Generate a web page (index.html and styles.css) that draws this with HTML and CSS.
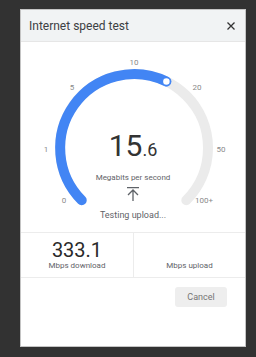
FILE: index.html
```html
<!DOCTYPE html>
<html lang="en">
<head>
  <meta charset="UTF-8">
  <meta name="viewport" content="width=device-width, initial-scale=1.0">
  <title>Internet speed test</title>
  <link rel="stylesheet" href="styles.css">
</head>
<body>
  <div class="dialog">
    <div class="dialog-header">
      <span class="dialog-title">Internet speed test</span>
      <svg class="close-icon" width="8" height="8" viewBox="0 0 8 8">
        <path d="M0.5 0.5 L7.5 7.5 M7.5 0.5 L0.5 7.5" stroke="#333" stroke-width="1.3" fill="none"/>
      </svg>
    </div>

    <div class="gauge">
      <svg class="gauge-dial" width="223" height="190" viewBox="0 0 223 190">
        <path d="M60.7 158.3 A74 74 0 1 1 165.3 158.3" stroke="#ebebeb" stroke-width="10" fill="none" stroke-linecap="round"/>
        <path d="M60.7 158.3 A74 74 0 0 1 145.4 39.5" stroke="#4285f4" stroke-width="10" fill="none" stroke-linecap="round"/>
        <circle cx="145.4" cy="39.5" r="4" fill="#fff" stroke="#4285f4" stroke-width="1.5"/>
        <g class="tick-labels">
          <text x="43" y="158">0</text>
          <text x="25" y="107">1</text>
          <text x="51" y="45">5</text>
          <text x="113" y="20">10</text>
          <text x="176" y="45">20</text>
          <text x="200" y="107">50</text>
          <text x="183" y="158">100+</text>
        </g>
      </svg>
      <div class="readout">
        <div class="speed">15<span class="speed-decimal">.6</span></div>
        <div class="speed-unit">Megabits per second</div>
        <svg class="upload-icon" width="14" height="14" viewBox="0 0 14 14">
          <path d="M1 0.7 H13 M7 3 V14 M2 8 L7 3 L12 8" stroke="#5f6368" stroke-width="1.3" fill="none"/>
        </svg>
        <div class="status">Testing upload...</div>
      </div>
    </div>

    <div class="stats">
      <div class="stat">
        <div class="stat-value">333.1</div>
        <div class="stat-label">Mbps download</div>
      </div>
      <div class="stat">
        <div class="stat-value">&nbsp;</div>
        <div class="stat-label">Mbps upload</div>
      </div>
    </div>

    <div class="dialog-footer">
      <button class="cancel-button">Cancel</button>
    </div>
  </div>
</body>
</html>
```

FILE: styles.css
```css
body {
  background-color: #323232;
  font-family: Roboto, 'Liberation Sans', sans-serif;
  margin: 0;
  height: 357px;
  overflow: hidden;
}

.dialog {
  box-sizing: border-box;
  width: 226px;
  height: 338px;
  margin: 9px 0 0 20px;
  background: #fff;
  border: 1px solid #c4c4c4;
  display: flex;
  flex-direction: column;
}

.dialog-header {
  height: 31px;
  background: #f1f3f4;
  border-bottom: 1px solid #e6e6e6;
  display: flex;
  align-items: center;
  justify-content: space-between;
  padding: 0 10px 0 8px;
}

.dialog-title {
  font-size: 12px;
  color: #3c4043;
}

.close-icon {
  display: block;
}

.gauge {
  display: grid;
  height: 190px;
}

.gauge-dial,
.readout {
  grid-area: 1 / 1;
}

.tick-labels text {
  font-family: Roboto, 'Liberation Sans', sans-serif;
  font-size: 8px;
  fill: #8a8a8a;
  text-anchor: middle;
  dominant-baseline: central;
}

.readout {
  display: flex;
  flex-direction: column;
  align-items: center;
  padding-top: 89px;
}

.speed {
  font-size: 30px;
  line-height: 30px;
  color: #333;
}

.speed-decimal {
  font-size: 18px;
}

.speed-unit {
  margin-top: 8px;
  font-size: 8px;
  line-height: 10px;
  color: #5f6368;
}

.upload-icon {
  display: block;
  margin-top: 4px;
}

.status {
  margin-top: 8px;
  font-size: 9px;
  line-height: 12px;
  color: #5f6368;
}

.stats {
  display: grid;
  grid-template-columns: 1fr 1fr;
  border-top: 1px solid #ececec;
  border-bottom: 1px solid #ececec;
  height: 44px;
}

.stat {
  display: flex;
  flex-direction: column;
  align-items: center;
  padding-top: 6px;
}

.stat + .stat {
  border-left: 1px solid #ececec;
}

.stat-value {
  font-size: 20px;
  line-height: 22px;
  color: #2a2a2a;
}

.stat-label {
  font-size: 8px;
  line-height: 9px;
  color: #5f6368;
}

.dialog-footer {
  display: flex;
  justify-content: flex-end;
  padding: 9px 18px 0 0;
}

.cancel-button {
  width: 52px;
  height: 20px;
  border: none;
  border-radius: 3px;
  background: #eeeeee;
  font-family: Roboto, 'Liberation Sans', sans-serif;
  font-size: 9px;
  color: #757575;
  padding: 0;
}
```
